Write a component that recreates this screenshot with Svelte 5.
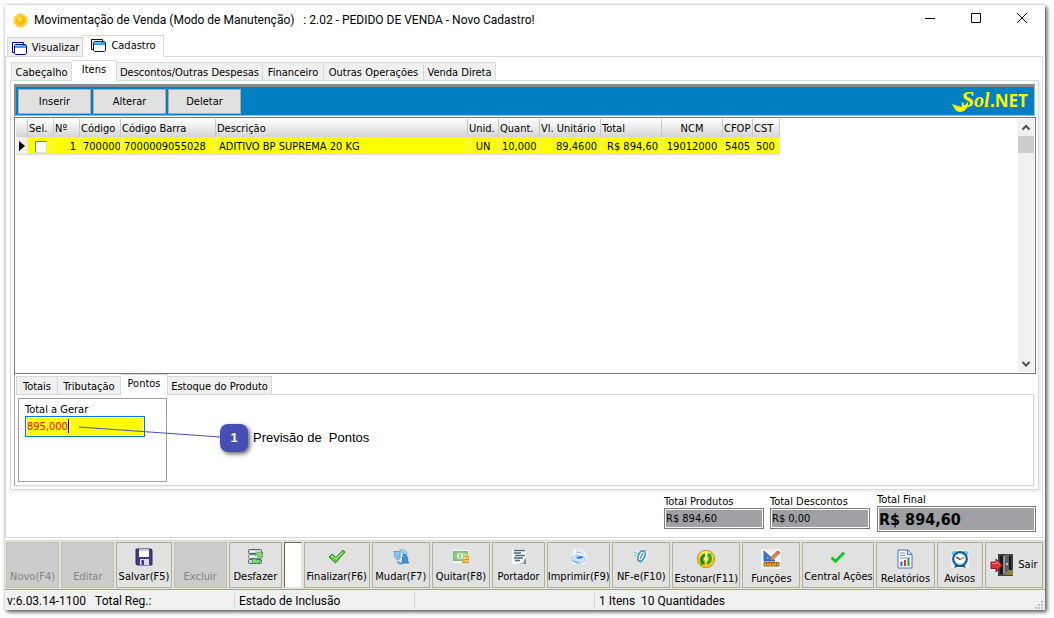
<script>
  const mainTabs = [
    { label: 'Visualizar', width: 76 },
    { label: 'Cadastro', width: 81 }
  ];

  const formTabs = [
    { label: 'Cabeçalho', width: 61 },
    { label: 'Itens', width: 45 },
    { label: 'Descontos/Outras Despesas', width: 146 },
    { label: 'Financeiro', width: 61 },
    { label: 'Outras Operações', width: 100 },
    { label: 'Venda Direta', width: 72 }
  ];

  const detailTabs = [
    { label: 'Totais', width: 42 },
    { label: 'Tributação', width: 63 },
    { label: 'Pontos', width: 47 },
    { label: 'Estoque do Produto', width: 104 }
  ];

  const columns = [
    { key: 'sel', label: 'Sel.', width: 26 },
    { key: 'num', label: 'Nº', width: 26, align: 'right' },
    { key: 'codigo', label: 'Código', width: 41 },
    { key: 'barra', label: 'Código Barra', width: 95 },
    { key: 'descricao', label: 'Descrição', width: 252 },
    { key: 'unid', label: 'Unid.', width: 31, align: 'center' },
    { key: 'quant', label: 'Quant.', width: 41, align: 'right' },
    { key: 'unitario', label: 'Vl. Unitário', width: 61, align: 'right' },
    { key: 'total', label: 'Total', width: 61, align: 'right' },
    { key: 'ncm', label: 'NCM', width: 61, align: 'center', head: 'center' },
    { key: 'cfop', label: 'CFOP', width: 30, align: 'center' },
    { key: 'cst', label: 'CST', width: 27 }
  ];

  const rows = [
    {
      num: '1',
      codigo: '7000009',
      barra: '7000009055028',
      descricao: 'ADITIVO BP SUPREMA 20 KG',
      unid: 'UN',
      quant: '10,000',
      unitario: '89,4600',
      total: 'R$ 894,60',
      ncm: '19012000',
      cfop: '5405',
      cst: '500'
    }
  ];

  const actions = [
    { label: 'Novo(F4)', width: 54, disabled: true },
    { label: 'Editar', width: 54, disabled: true },
    { label: 'Salvar(F5)', width: 56, icon: 'save' },
    { label: 'Excluir', width: 54, disabled: true },
    { label: 'Desfazer', width: 54, icon: 'undo' },
    { spacer: true, width: 18 },
    { label: 'Finalizar(F6)', width: 67, icon: 'check' },
    { label: 'Mudar(F7)', width: 59, icon: 'swap' },
    { label: 'Quitar(F8)', width: 59, icon: 'money' },
    { label: 'Portador', width: 54, icon: 'doc' },
    { label: 'Imprimir(F9)', width: 64, icon: 'print' },
    { label: 'NF-e(F10)', width: 59, icon: 'nfe' },
    { label: 'Estonar(F11)', width: 69, icon: 'recycle', low: true },
    { label: 'Funções', width: 59, icon: 'tools', low: true },
    { label: 'Central Ações', width: 73, icon: 'tick' },
    { label: 'Relatórios', width: 59, icon: 'report', low: true },
    { label: 'Avisos', width: 47, icon: 'clock', low: true },
    { label: 'Sair', width: 59, icon: 'exit', side: true }
  ];

  let mainTab = $state('Cadastro');
  let formTab = $state('Itens');
  let detailTab = $state('Pontos');
  let pontos = $state('895,000');
</script>

<div class="screen">
  <div class="window">
    <header class="titlebar">
      <svg class="sun" viewBox="0 0 14 14">
        <circle cx="7" cy="7" r="6" fill="#ffd84a" stroke="#f7c948" stroke-width="1.5" stroke-dasharray="2 1" />
        <circle cx="7" cy="7" r="4.6" fill="#ffb909" />
        <circle cx="6" cy="5.5" r="2.4" fill="#ffd93b" />
      </svg>
      <h1>Movimentação de Venda (Modo de Manutenção) &nbsp; : 2.02 - PEDIDO DE VENDA - Novo Cadastro!</h1>
      <div class="window-buttons">
        <button aria-label="Minimizar"><svg viewBox="0 0 12 12"><path d="M1 6.5h10" /></svg></button>
        <button aria-label="Maximizar"><svg viewBox="0 0 12 12"><path d="M1.5 1.5h9v9h-9z" /></svg></button>
        <button aria-label="Fechar"><svg viewBox="0 0 12 12"><path d="M1 1l10 10M11 1L1 11" /></svg></button>
      </div>
    </header>

    <nav class="tabs main-tabs">
      {#each mainTabs as tab}
        <button class:active={mainTab === tab.label} style="width: {tab.width}px" onclick={() => (mainTab = tab.label)}>
          <svg class="tab-icon" viewBox="0 0 17 15">
            <path d="M1.5 11.500V1.500H12.500V3" fill="#fff" stroke="#00009c" />
            <path d="M1.500 11.500H4" stroke="#00009c" />
            <path d="M4.500 3.500h10l1 1v8l-1 1h-10l-1-1v-8z" fill="#fff" stroke="#00009c" />
            <path d="M4 4h11v3H4z" fill="#3aa0ee" />
            <path d="M4 4h7v1H4z" fill="#9bd5ff" />
          </svg>
          <span>{tab.label}</span>
        </button>
      {/each}
    </nav>

    <main class="main-page">
      <nav class="tabs form-tabs">
        {#each formTabs as tab}
          <button class:active={formTab === tab.label} style="width: {tab.width}px" onclick={() => (formTab = tab.label)}>
            {tab.label}
          </button>
        {/each}
      </nav>

      <section class="form-page">
        <div class="toolbar">
          <button>Inserir</button>
          <button>Alterar</button>
          <button>Deletar</button>
          <svg class="logo" viewBox="0 0 78 24">
            <path d="M0 15c4 1 8 4 12 2l4-4c1 5-3 10-8 10C4 23 2 19 0 15z" />
            <text x="9" y="18" class="logo-s">S</text>
            <text x="22" y="18" class="logo-ol">ol</text>
            <text x="38" y="18" class="logo-net">.NET</text>
          </svg>
        </div>

        <div class="grid">
          <div class="grid-body">
            <table>
              <colgroup>
                <col class="marker-col" />
                {#each columns as col}
                  <col style="width: {col.width}px" />
                {/each}
              </colgroup>
              <thead>
                <tr>
                  <th></th>
                  {#each columns as col}
                    <th class={col.head}>{col.label}</th>
                  {/each}
                </tr>
              </thead>
              <tbody>
                {#each rows as row}
                  <tr>
                    <td class="marker"><svg viewBox="0 0 6 10"><path d="M0 0l6 5-6 5z" /></svg></td>
                    {#each columns as col}
                      {#if col.key === 'sel'}
                        <td class="center"><input type="checkbox" aria-label="Selecionar item" /></td>
                      {:else}
                        <td class={col.align}>{row[col.key]}</td>
                      {/if}
                    {/each}
                  </tr>
                {/each}
              </tbody>
            </table>
          </div>
          <div class="scrollbar">
            <svg viewBox="0 0 16 17"><path d="M4.500 10.500L8 7l3.500 3.500" /></svg>
            <div class="thumb"></div>
            <svg viewBox="0 0 16 17"><path d="M4.500 7L8 10.500 11.500 7" /></svg>
          </div>
        </div>

        <div class="details">
          <nav class="tabs detail-tabs">
            {#each detailTabs as tab}
              <button class:active={detailTab === tab.label} style="width: {tab.width}px" onclick={() => (detailTab = tab.label)}>
                {tab.label}
              </button>
            {/each}
          </nav>
          <div class="detail-page">
            <div class="points-box">
              <label for="pontos">Total a Gerar</label>
              <div class="points-field">
                <input id="pontos" type="text" bind:value={pontos} />
                <i class="caret"></i>
              </div>
            </div>
            <div class="callout">
              <svg viewBox="0 0 142 12"><path d="M1 1l141 10" /></svg>
              <b>1</b>
              <span>Previsão de &nbsp;Pontos</span>
            </div>
          </div>
        </div>
      </section>

      <footer class="totals">
        <div class="total">
          <label for="produtos">Total Produtos</label>
          <input id="produtos" type="text" value="R$ 894,60" readonly />
        </div>
        <div class="total">
          <label for="descontos">Total Descontos</label>
          <input id="descontos" type="text" value="R$ 0,00" readonly />
        </div>
        <div class="total final">
          <label for="final">Total Final</label>
          <input id="final" type="text" value="R$ 894,60" readonly />
        </div>
      </footer>
    </main>

    <div class="actions">
      {#each actions as action}
        {#if action.spacer}
          <div class="spacer" style="flex-basis: {action.width}px"></div>
        {:else}
          <button
            class:side={action.side}
            class:low={action.low}
            disabled={action.disabled}
            style="flex-basis: {action.width}px"
          >
            {#if action.icon}
              <svg class="icon" viewBox={action.side ? '0 0 24 24' : '0 0 20 20'}>
                {#if action.icon === 'save'}
                  <path d="M2 2h15l1 1v15H3l-1-1z" fill="#443c86" stroke="#2e2868" />
                  <path d="M5 2h10v8H5z" fill="#fff" />
                  <path d="M5 2h10v2H5z" fill="#c3c5df" />
                  <path d="M6 12h9v6H6z" fill="#d9dbe8" />
                  <path d="M7.500 13h2.500v5H7.500z" fill="#443c86" />
                {:else if action.icon === 'undo'}
                  <rect x="3.500" y="2.500" width="13" height="4" rx="1" fill="#cbd6de" stroke="#52646f" />
                  <rect x="3.500" y="7.500" width="13" height="4" rx="1" fill="#dbe4ea" stroke="#6e7f8a" />
                  <rect x="3.500" y="12.500" width="13" height="4" rx="1" fill="#cbd6de" stroke="#52646f" />
                  <path d="M5 4.500h5M5 9.500h4M12 14.500h3" stroke="#fff" />
                  <path d="M10 8.500c0-3 4-4 6-2l1.500-1.500v5h-5L14 8.500c-1-1-2-1-4 0z" fill="#8be966" stroke="#27963a" stroke-width=".7" />
                  <path d="M16 13c-1 4-5 4-7 2.500L7.500 17v-5h5L11 13.500c1 1 3 1 5-.5z" fill="#8be966" stroke="#27963a" stroke-width=".7" />
                {:else if action.icon === 'check'}
                  <path d="M2 10l3-3 4 3.500L16 3l2 2-9.500 11z" fill="#5fcb45" stroke="#268a2f" stroke-linejoin="round" />
                  <path d="M4 10l1.200-1.200L9 12l6.500-6.500" fill="none" stroke="#a8ee8b" />
                {:else if action.icon === 'swap'}
                  <path d="M8 13C4 12 2.500 9 4 6L2.500 4.500H9V11L7 9C6.500 10 7 11.500 8 12z" fill="#86c6f4" stroke="#4c9bdc" stroke-width=".8" />
                  <path d="M9 3c4-1 7 1 7 5l-2.500-.5C13.500 6 12 5 10 5z" fill="#a8daf8" stroke="#5aa7e2" stroke-width=".8" />
                  <path d="M12 7c4 1 5.500 4 4.500 7l1.500 2h-6.500V9.500l2 2c.5-1.500 0-2.500-1.500-3.500z" fill="#3c97e0" stroke="#1f70bd" stroke-width=".8" />
                  <path d="M12 17c-3 1-5.500 0-6.500-3l2.500.5c1 1 2 1 3.500.5z" fill="#4ba0e3" />
                {:else if action.icon === 'money'}
                  <path d="M2 3h16v13H2z" fill="#fff" />
                  <path d="M2 4h15v10H2z" fill="#8cca85" />
                  <path d="M3 5h13v8H3z" fill="#a5d99d" stroke="#6fb169" />
                  <ellipse cx="9" cy="9" rx="3" ry="3" fill="#d8f0d0" />
                  <path d="M4 7h2M4 11h2M9 7v4" stroke="#5d9e58" />
                  <path d="M11 11h3v5h-3zM14 7h4v9h-4z" fill="#f2c85e" />
                  <path d="M11 13h3M14 9.500h4M14 12.500h4M11 15.500h7" stroke="#d4962f" />
                {:else if action.icon === 'doc'}
                  <path d="M3 2h14v15H3z" fill="#f7f8fb" />
                  <path d="M5 3.500h11M5 6h7M6 8.500h10M5 11h9M6 13.500h5" stroke="#52637b" stroke-width="1.300" />
                  <path d="M11 17l6-6v6z" fill="#7c8999" /><path d="M10.500 16.500l5-4-1 4z" fill="#dfe5ed" />
                {:else if action.icon === 'print'}
                  <path d="M5 2h9l4 8-2 7H3V9z" fill="#f3f6fc" />
                  <path d="M7 3l6 1 1 6-6-2z" fill="#fff" stroke="#b3c7ed" stroke-width=".7" />
                  <path d="M8 5l4 1" stroke="#83aff0" />
                  <path d="M3 10l4-2 9 2v4l-6 3-7-3z" fill="#d3e1f8" stroke="#a5bce4" stroke-width=".7" />
                  <path d="M7 10l6-1 1 2-5 1z" fill="#2f82e6" />
                  <path d="M4 13l6 2v2l-6-2z" fill="#8fb2e8" />
                {:else if action.icon === 'nfe'}
                  <path d="M2 5l4-2 3 2 4-3 4 2-1 6-4 7-3-1-3-5z" fill="#e4f2f9" />
                  <ellipse cx="10.500" cy="9" rx="3.200" ry="5.500" transform="rotate(25 10.500 9)" fill="none" stroke="#3d91b4" stroke-width="1.600" />
                  <path d="M9 12l3-6" stroke="#6d8f66" stroke-width="1.200" />
                  <path d="M3 5l4 2M14 3l2 1M5 9L3 8M9 16l3-2" fill="none" stroke="#82bdd3" stroke-width="1.200" />
                {:else if action.icon === 'recycle'}
                  <circle cx="10" cy="10" r="8.700" fill="#f6c51c" stroke="#b99728" />
                  <ellipse cx="10" cy="7.500" rx="6.500" ry="5.500" fill="#ffe968" />
                  <path d="M9 4.500v3C7.500 8 7 11 7.500 12l1-1v4.500H4l1-1.300C3 10 4 5.500 9 4.500z" fill="#198d27" />
                  <path d="M11 15.500v-3c1.500-.5 2-3.500 1.500-4.500l-1 1V4.500H16l-1 1.300c2 4.200 1 8.700-4 9.700z" fill="#27a531" />
                {:else if action.icon === 'tools'}
                  <path d="M0 0h20v20H0z" fill="#f5f1e8" />
                  <path d="M3 2l11 10H3zM5.500 7v3h3.500z" fill="#347dd9" stroke="#1756a9" stroke-width=".8" fill-rule="evenodd" />
                  <path d="M16.500 2l2 2-7 7-2.500.5.500-2.500z" fill="#d88f59" stroke="#875131" stroke-width=".8" />
                  <path d="M16 2.500l2 2 1-1-2-2z" fill="#d94f5c" />
                  <path d="M3 13.500h15V17H3z" fill="#f3ac28" stroke="#a5661e" />
                  <path d="M5.500 14v2M8 14v1.500M10.500 14v2M13 14v1.500M15.500 14v2" stroke="#8c5518" />
                {:else if action.icon === 'tick'}
                  <path d="M3.500 10.500l4 4L16 5.500" fill="none" stroke="#08cb13" stroke-width="2.600" />
                {:else if action.icon === 'report'}
                  <path d="M3 1h10l4 4v14H3z" fill="#f8fbff" stroke="#4a79bb" />
                  <path d="M12.500 1v4.500H17" fill="#cfe0f5" stroke="#4a79bb" />
                  <path d="M5 4h5M5 6.500h5M5 9h10" stroke="#6aa1dc" />
                  <path d="M5.500 12.500h2V17h-2z" fill="#3464cf" /><path d="M9 11h2v6H9z" fill="#e03830" /><path d="M12.500 9h2v8h-2z" fill="#1d9e44" />
                {:else if action.icon === 'clock'}
                  <path d="M1 1h18v18H1z" fill="#edf3f8" />
                  <path d="M1.500 5c0-3 3-4 5-2.500L3 6.500zM18.500 5c0-3-3-4-5-2.500L17 6.500z" fill="#73bdea" />
                  <path d="M4 19l2-3.500h8l2 3.500-3-1H7z" fill="#164f80" />
                  <circle cx="10" cy="10" r="6.800" fill="#fff" stroke="#14568c" stroke-width="2.200" />
                  <circle cx="10" cy="10" r="5.300" fill="none" stroke="#a3d2ee" />
                  <path d="M6.500 8l3.500 2.500" stroke="#222" stroke-width="1.200" /><path d="M10 10.500l4-2" stroke="#e2514a" stroke-width="1.200" />
                {:else if action.icon === 'exit'}
                  <path d="M8 1h15v22H8z" fill="#3e3e3e" />
                  <path d="M10 3h11v18H10z" fill="#17181a" />
                  <path d="M14 22l4-5h5v5z" fill="#8b8741" />
                  <path d="M13 3l6-1.500V17l-6 5z" fill="#8d9094" />
                  <path d="M15 3l4-1.500V17l-4 3z" fill="#5c6064" />
                  <circle cx="17" cy="11" r="1" fill="#e3e3e3" />
                  <path d="M1 9h5V6l6 6.500L6 19v-3.500H1z" fill="#e32d35" stroke="#8d1820" />
                  <path d="M2 10.500h5V8.500l3 3.500" fill="none" stroke="#ff8d88" />
                {/if}
              </svg>
            {/if}
            <span>{action.label}</span>
          </button>
        {/if}
      {/each}
    </div>

    <div class="status">
      <div class="version"><span>v:6.03.14-1100</span><span>Total Reg.:</span></div>
      <div class="state">Estado de Inclusão</div>
      <div class="state"></div>
      <div class="count">1 Itens &nbsp;10 Quantidades</div>
      <svg viewBox="0 0 9 9">
        <path d="M6 0h2v2H6zM3 3h2v2H3zM6 3h2v2H6zM0 6h2v2H0zM3 6h2v2H3zM6 6h2v2H6z" />
      </svg>
    </div>
  </div>
</div>

<style>
  :global(body) {
    background: #fff;
  }

  .screen {
    box-sizing: border-box;
    display: flex;
    min-height: 100vh;
    padding: 5px 9px 8px 5px;
    font-family: 'DejaVu Sans Condensed', 'Noto Sans', sans-serif;
    font-size: 11px;
    line-height: 14px;
    color: #000;
  }

  .screen * {
    box-sizing: border-box;
  }

  button,
  input {
    margin: 0;
    padding: 0;
    font: inherit;
    color: inherit;
    border-radius: 0;
  }

  .window {
    flex: 1;
    min-width: 0;
    display: flex;
    flex-direction: column;
    background: #fff;
    box-shadow: 2px 2px 4px #555, 0 0 3px #ccc;
  }

  .titlebar {
    display: flex;
    align-items: center;
    height: 30px;
    padding-left: 8px;
    font-family: Roboto, 'Noto Sans', sans-serif;
  }

  .sun {
    width: 15px;
    height: 15px;
  }

  h1 {
    flex: 1;
    margin: 0 0 0 6px;
    font-size: 12px;
    font-weight: 400;
    line-height: 16px;
    white-space: nowrap;
  }

  .window-buttons {
    display: flex;
  }

  .window-buttons button {
    width: 46px;
    height: 28px;
    border: 0;
    background: none;
  }

  .window-buttons svg {
    width: 12px;
    height: 12px;
    fill: none;
    stroke: #000;
  }

  .tabs {
    display: flex;
    align-items: flex-end;
    height: 21px;
    margin-bottom: -1px;
    position: relative;
  }

  .tabs button {
    display: flex;
    align-items: center;
    justify-content: center;
    height: 19px;
    padding-top: 2px;
    border: 1px solid #d9d9d9;
    border-left-width: 0;
    background: #f0f0f0;
    white-space: nowrap;
  }

  .tabs button:first-child {
    border-left-width: 1px;
  }

  .tabs button.active {
    height: 21px;
    padding: 0 0 1px;
    border-bottom-color: #fff;
    background: #fff;
  }

  .main-tabs {
    height: 22px;
    padding-left: 2px;
  }

  .main-tabs button {
    gap: 4px;
    height: 20px;
  }

  .main-tabs button.active {
    height: 22px;
  }

  .tab-icon {
    width: 17px;
    height: 15px;
  }

  .main-page {
    flex: 1;
    display: flex;
    flex-direction: column;
    margin-right: 2px;
    padding: 3px 3px 7px 4px;
    border: 1px solid #d9d9d9;
  }

  .form-tabs {
    padding-left: 1px;
  }

  .form-page {
    flex: 1;
    display: flex;
    flex-direction: column;
    padding: 3px 2px 3px 3px;
    border: 1px solid #d9d9d9;
    box-shadow: 2px 2px 0 #f0f0f0;
  }

  .toolbar {
    display: flex;
    align-items: center;
    gap: 2px;
    height: 32px;
    margin-right: 1px;
    padding: 0 4px 0 2px;
    border: 2px solid #8a8a8a;
    border-top: 3px solid #8a8a8a;
    border-right: 1px solid #b5b5b5;
    border-bottom: 1px solid #b5b5b5;
    background: #007fc3;
  }

  .toolbar button {
    width: 73px;
    height: 25px;
    padding-top: 2px;
    border: 1px solid #adadad;
    background: #e1e1e1;
  }

  .logo {
    width: 78px;
    height: 24px;
    margin-left: auto;
    overflow: visible;
    fill: #fff200;
  }

  .logo-s {
    font: italic bold 24px 'Liberation Serif', serif;
  }

  .logo-ol {
    font: italic bold 20px 'Liberation Serif', serif;
  }

  .logo-net {
    font: bold 17px 'Noto Sans', sans-serif;
  }

  .grid {
    flex: 1;
    display: flex;
    min-height: 160px;
    margin-top: 1px;
    padding: 1px;
    border: 1px solid #777;
  }

  .grid-body {
    flex: 1;
    min-width: 0;
    overflow: hidden;
  }

  table {
    width: 764px;
    table-layout: fixed;
    border-collapse: separate;
    border-spacing: 0;
  }

  .marker-col {
    width: 12px;
  }

  th,
  td {
    overflow: hidden;
    white-space: nowrap;
    text-align: left;
  }

  th {
    height: 18px;
    padding: 2px 1px 0;
    border-right: 1px solid #c8c8c8;
    background: linear-gradient(#fff, #d5d5d5);
    font-weight: 400;
  }

  td {
    height: 18px;
    padding: 2px 3px 0;
    border-right: 1px solid #e6e6c0;
    border-bottom: 1px solid #e0e0e0;
    background: #ff0;
  }

  .right {
    text-align: right;
  }

  td.center {
    padding: 2px 0 0;
  }

  .center {
    text-align: center;
  }

  td.marker {
    padding: 0 0 0 3px;
    background: #f0f0f0;
  }

  .marker svg {
    display: block;
    width: 6px;
    height: 10px;
  }

  td input {
    appearance: none;
    display: block;
    width: 12px;
    height: 12px;
    margin: 0 auto;
    border: 1px solid #ddd;
    border-top-color: #777;
    border-left-color: #777;
    background: #fff;
  }

  .scrollbar {
    display: flex;
    flex-direction: column;
    width: 16px;
    background: #f0f0f0;
  }

  .scrollbar svg {
    width: 16px;
    height: 17px;
    fill: none;
    stroke: #505050;
    stroke-width: 2;
  }

  .thumb {
    height: 17px;
    margin-bottom: auto;
    background: #cdcdcd;
  }

  .details {
    margin-right: 2px;
    border-left: 1px solid #aaa;
  }

  .detail-tabs {
    padding-left: 1px;
  }

  .detail-page {
    display: flex;
    align-items: flex-start;
    padding: 3px;
    border: 1px solid #d9d9d9;
    border-left: 0;
    box-shadow: 1px 1px 0 #f0f0f0;
  }

  .points-box {
    width: 149px;
    height: 84px;
    padding: 4px 6px;
    border: 1px solid #a0a0a0;
  }

  .points-box label,
  .total label {
    display: block;
    line-height: 13px;
    white-space: nowrap;
  }

  .points-field {
    position: relative;
    width: 120px;
  }

  .points-field input {
    display: block;
    width: 120px;
    height: 21px;
    padding: 0 1px;
    border: 1px solid #0078d7;
    outline: 0;
    box-shadow: inset 0 0 0 1px #fff;
    background: #ff0;
    color: #f00;
  }

  /* text cursor after the typed value */
  .caret {
    position: absolute;
    top: 3px;
    left: 43px;
    width: 1px;
    height: 14px;
    background: #00f;
  }

  /* the note points back into the field, over the box */
  .callout {
    position: relative;
    display: flex;
    align-items: center;
    gap: 5px;
    margin: 26px 0 0 53px;
    font: 13px/18px 'Liberation Sans', sans-serif;
    white-space: nowrap;
  }

  .callout svg {
    position: absolute;
    top: 2px;
    right: 100%;
    width: 142px;
    height: 12px;
    fill: none;
    stroke: #484fb4;
  }

  .callout b {
    width: 28px;
    height: 28px;
    border-radius: 8px;
    background: #484fb4;
    box-shadow: 2px 2px 4px #666;
    color: #fff;
    line-height: 28px;
    text-align: center;
  }

  .totals {
    display: flex;
    justify-content: flex-end;
    gap: 6px;
    height: 40px;
    padding: 3px 3px 0 0;
  }

  .total {
    width: 100px;
    padding-top: 2px;
  }

  .total input {
    display: block;
    width: 100%;
    height: 21px;
    padding: 0 1px;
    border: 1px solid #7a7a7a;
    box-shadow: inset 0 0 0 1px #fff;
    background: #a0a0a4;
  }

  .final {
    width: 159px;
    margin-left: 1px;
    padding-top: 0;
  }

  .final input {
    height: 26px;
    font-size: 16px;
    font-weight: 700;
  }

  .actions {
    display: flex;
    gap: 2px;
    height: 50px;
    margin-top: 2px;
    padding: 1px 2px 1px 1px;
    border-top: 1px solid #d9d9d9;
    border-bottom: 1px solid #a0a0a0;
    background: #e6e6c8;
  }

  .actions button {
    flex: 1 1 auto;
    display: flex;
    flex-direction: column;
    align-items: center;
    justify-content: flex-end;
    min-width: 0;
    padding-bottom: 3px;
    border: 1px solid #adadad;
    background: #e1e1e1;
    white-space: nowrap;
  }

  .actions button.low {
    padding-bottom: 1px;
  }

  .actions button:disabled {
    border-color: #bfbfbf;
    background: #ccc;
    color: #838383;
  }

  .actions button.side {
    flex-direction: row;
    align-items: center;
    justify-content: center;
    gap: 4px;
    padding: 0;
  }

  .spacer {
    flex: 1 1 auto;
    border: 1px solid #e3e3e3;
    border-top-color: #696969;
    border-left-color: #696969;
    background: #fff;
  }

  .icon {
    width: 20px;
    height: 20px;
    margin-bottom: 3px;
  }

  .side .icon {
    width: 24px;
    height: 24px;
    margin: 0;
  }

  .status {
    display: flex;
    align-items: center;
    height: 20px;
    padding-right: 1px;
    background: #f0f0f0;
    font-family: Roboto, 'Noto Sans', sans-serif;
    font-size: 12px;
  }

  .status div {
    height: 17px;
    padding-left: 4px;
    line-height: 18px;
    white-space: nowrap;
  }

  .status .version {
    display: flex;
    gap: 9px;
    width: 229px;
    padding-left: 2px;
  }

  .status .state {
    width: 180px;
    border-left: 1px solid #d7d7d7;
  }

  .status .count {
    flex: 1;
    border-left: 1px solid #d7d7d7;
  }

  .status svg {
    align-self: flex-end;
    width: 9px;
    height: 9px;
    fill: #bfbfbf;
  }
</style>
